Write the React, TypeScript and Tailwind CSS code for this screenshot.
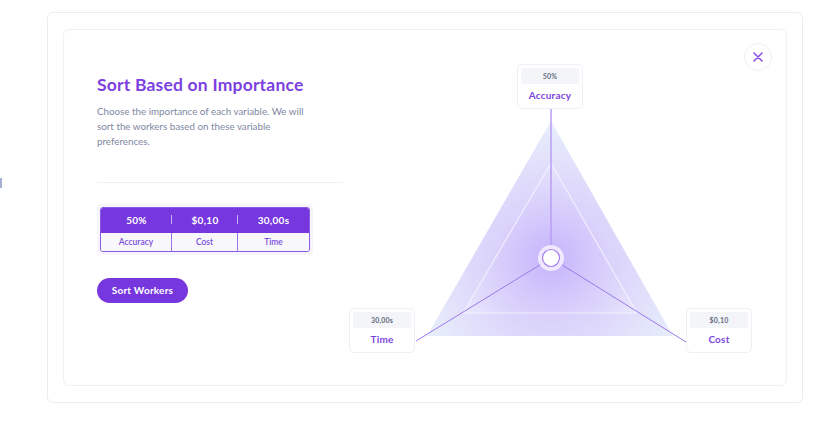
import React from "react";

const F = { fontFamily: "Lato, 'Open Sans', sans-serif" };

function NodeBox({ value, label, className }: { value: string; label: string; className: string }) {
  return (
    <div className={`absolute w-[66px] h-[45px] bg-white border border-[#eef0f5] rounded-[5px] p-[3px] flex flex-col items-center ${className}`}>
      <div className="w-full h-[16px] bg-[#f4f5f9] rounded-[2px] flex items-center justify-center text-[7px] font-bold text-[#646b80] tracking-[0.2px]">
        {value}
      </div>
      <div className="mt-[6px] text-[10px] font-bold text-[#7c45dd] leading-none tracking-[0.2px]">{label}</div>
    </div>
  );
}

function Chart() {
  return (
    <div className="relative w-[403px] h-[289px] ml-[6px] mt-[34px] shrink-0">
      <svg className="absolute left-0 top-0" width="403" height="289" viewBox="0 0 403 289">
        <defs>
          <radialGradient id="g1" cx="202" cy="200" r="150" gradientUnits="userSpaceOnUse">
            <stop offset="0" stopColor="#cfc1fb" />
            <stop offset="0.55" stopColor="#dfdafb" />
            <stop offset="1" stopColor="#e8f2fb" />
          </radialGradient>
          <radialGradient id="g2" cx="202" cy="194" r="110" gradientUnits="userSpaceOnUse">
            <stop offset="0" stopColor="#c3b0fb" stopOpacity="0.85" />
            <stop offset="0.6" stopColor="#dcd4fc" stopOpacity="0.55" />
            <stop offset="1" stopColor="#eff3fd" stopOpacity="0.7" />
          </radialGradient>
        </defs>
        <polygon points="202,57 78,272 324,272" fill="url(#g1)" />
        <polygon points="202,99 114,249 288,249" fill="url(#g2)" stroke="#f3f1ff" strokeWidth="1.2" strokeOpacity="0.9" />
        <line x1="202" y1="45" x2="202" y2="184" stroke="#b99ef5" strokeWidth="1.5" />
        <line x1="194" y1="199" x2="67" y2="277" stroke="#9c78ec" strokeWidth="1" />
        <line x1="210" y1="199" x2="337" y2="278" stroke="#9c78ec" strokeWidth="1" />
        <circle cx="202" cy="194" r="13" fill="#f4f0fe" fillOpacity="0.9" />
        <circle cx="202" cy="194" r="8.5" fill="#ffffff" stroke="#a77df0" strokeWidth="1.2" />
      </svg>
      <NodeBox value="50%" label="Accuracy" className="left-[168px] top-0" />
      <NodeBox value="30,00s" label="Time" className="left-0 top-[244px]" />
      <NodeBox value="$0,10" label="Cost" className="left-[337px] top-[244px]" />
    </div>
  );
}

export default function App() {
  return (
    <div className="relative w-[820px] h-[432px] bg-white overflow-hidden" style={F}>
      <div className="absolute left-0 top-[178px] w-[2px] h-[10px] bg-[#a7b0d2]" />
      <div className="pt-[12px] pl-[47px]">
        <div className="w-[756px] h-[391px] border border-[#ebecef] rounded-[6px] pt-[16px] px-[15px]">
          <div className="relative w-[724px] h-[357px] border border-[#f0f1f4] rounded-[6px] flex">
            <button className="absolute right-[14px] top-[13px] w-[28px] h-[28px] rounded-full border border-[#f1f0f6] bg-white flex items-center justify-center">
              <svg width="10" height="10" viewBox="0 0 10 10">
                <path d="M1 1 L9 9 M9 1 L1 9" stroke="#8a4fe6" strokeWidth="1.6" strokeLinecap="round" />
              </svg>
            </button>
            <div className="w-[246px] ml-[33px] pt-[44px] shrink-0">
              <h1 className="text-[17.5px] font-bold text-[#7b3fe0] leading-[22px] tracking-[0.2px]">Sort Based on Importance</h1>
              <p className="mt-[8px] w-[212px] text-[9.8px] leading-[15px] text-[#8088a2]">
                Choose the importance of each variable. We will sort the workers based on these variable preferences.
              </p>
              <div className="mt-[33px] h-px bg-[#eff0f3]" />
              <div className="mt-[21px] w-[216px] p-[3px] bg-[#f6f5fc] rounded-[4px]">
                <div className="border border-[#8a59e6] rounded-[3px] overflow-hidden">
                  <div className="h-[25px] bg-[#7637df] grid grid-cols-[71px_66px_1fr] items-center text-white text-[10px] font-bold tracking-[0.3px]">
                    <div className="relative text-center">50%<span className="absolute right-0 top-[2px] h-[9px] w-px bg-[#c6b2f4]" /></div>
                    <div className="relative text-center">$0,10<span className="absolute right-0 top-[2px] h-[9px] w-px bg-[#c6b2f4]" /></div>
                    <div className="text-center">30,00s</div>
                  </div>
                  <div className="h-[18px] bg-[#f7f7fc] grid grid-cols-[71px_66px_1fr] items-center text-[8.5px] font-semibold text-[#7d4edb]">
                    <div className="h-full flex items-center justify-center border-r border-[#9a73e6]">Accuracy</div>
                    <div className="h-full flex items-center justify-center border-r border-[#9a73e6]">Cost</div>
                    <div className="h-full flex items-center justify-center">Time</div>
                  </div>
                </div>
              </div>
              <button className="mt-[23px] w-[91px] h-[25px] rounded-full bg-[#7637df] text-white text-[10px] font-bold tracking-[0.2px]">
                Sort Workers
              </button>
            </div>
            <Chart />
          </div>
        </div>
      </div>
    </div>
  );
}
